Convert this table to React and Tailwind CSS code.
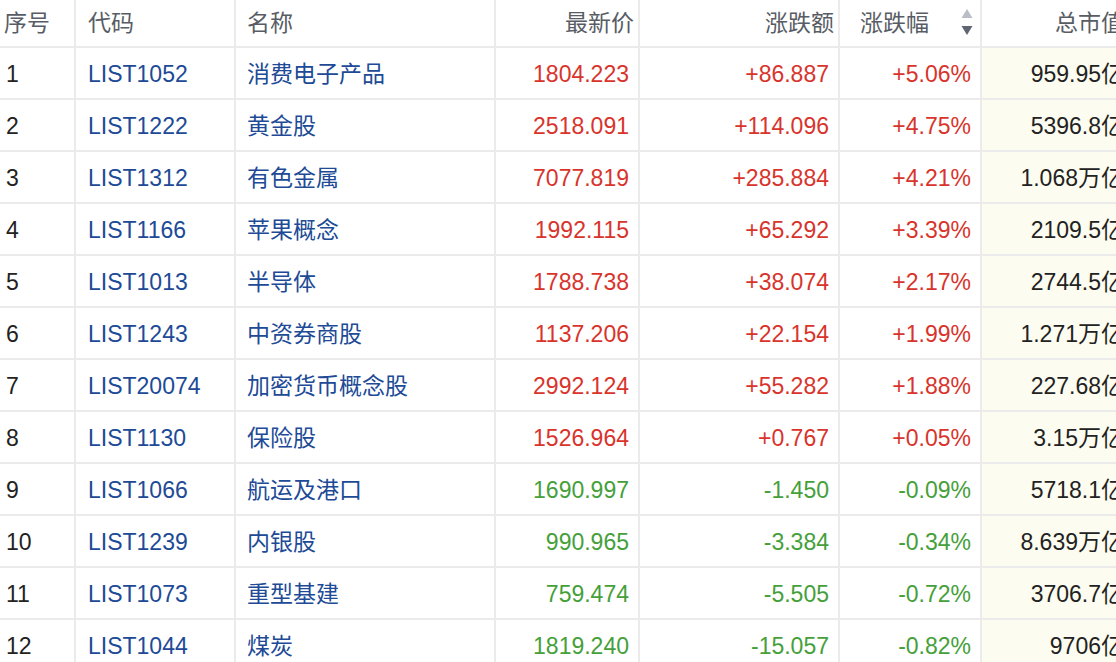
const rows = [
  ["1", "LIST1052", "消费电子产品", "1804.223", "+86.887", "+5.06%", "959.95亿"],
  ["2", "LIST1222", "黄金股", "2518.091", "+114.096", "+4.75%", "5396.8亿"],
  ["3", "LIST1312", "有色金属", "7077.819", "+285.884", "+4.21%", "1.068万亿"],
  ["4", "LIST1166", "苹果概念", "1992.115", "+65.292", "+3.39%", "2109.5亿"],
  ["5", "LIST1013", "半导体", "1788.738", "+38.074", "+2.17%", "2744.5亿"],
  ["6", "LIST1243", "中资券商股", "1137.206", "+22.154", "+1.99%", "1.271万亿"],
  ["7", "LIST20074", "加密货币概念股", "2992.124", "+55.282", "+1.88%", "227.68亿"],
  ["8", "LIST1130", "保险股", "1526.964", "+0.767", "+0.05%", "3.15万亿"],
  ["9", "LIST1066", "航运及港口", "1690.997", "-1.450", "-0.09%", "5718.1亿"],
  ["10", "LIST1239", "内银股", "990.965", "-3.384", "-0.34%", "8.639万亿"],
  ["11", "LIST1073", "重型基建", "759.474", "-5.505", "-0.72%", "3706.7亿"],
  ["12", "LIST1044", "煤炭", "1819.240", "-15.057", "-0.82%", "9706亿"],
];

const grid =
  "grid grid-cols-[76px_160px_260px_144px_200px_142px_150px] w-[1132px]";
const cell = "flex items-center border-r-2 border-[#ebebeb]";
const body = "pt-[3px]";

function SortIcon() {
  return (
    <svg width="12" height="28" viewBox="0 0 12 28" className="ml-auto mr-[7px]">
      <path d="M6 0 L11.5 9 L0.5 9 Z" fill="#b9bdc6" />
      <path d="M0.5 17 L11.5 17 L6 26 Z" fill="#5f6571" />
    </svg>
  );
}

export default function App() {
  return (
    <div
      className="w-[1116px] h-[662px] overflow-hidden bg-white text-[23px]"
      style={{ fontFamily: '"Liberation Sans", "Noto Sans CJK SC", sans-serif' }}
    >
      <div className={`${grid} h-[48px] border-b-2 border-[#ebebeb] text-[#585d65]`}>
        <div className={`${cell} pl-[4px]`}>序号</div>
        <div className={`${cell} pl-[12px]`}>代码</div>
        <div className={`${cell} pl-[11px]`}>名称</div>
        <div className={`${cell} justify-end pr-[4px]`}>最新价</div>
        <div className={`${cell} justify-end pr-[4px]`}>涨跌额</div>
        <div className={`${cell} pl-[20px]`}>
          涨跌幅
          <SortIcon />
        </div>
        <div className="flex items-center justify-end pr-[8px]">总市值</div>
      </div>

      {rows.map((r) => {
        const up = r[4].startsWith("+");
        const tone = up ? "text-[#d8342c]" : "text-[#45a03a]";
        return (
          <div
            key={r[0]}
            className={`${grid} h-[52px] border-b-2 border-[#ebebeb]`}
          >
            <div className={`${cell} ${body} pl-[6px] text-[#222]`}>{r[0]}</div>
            <div className={`${cell} ${body} pl-[12px] text-[#204a96]`}>{r[1]}</div>
            <div className={`${cell} ${body} pl-[11px] text-[#204a96]`}>{r[2]}</div>
            <div className={`${cell} ${body} justify-end pr-[9px] ${tone}`}>{r[3]}</div>
            <div className={`${cell} ${body} justify-end pr-[9px] ${tone}`}>{r[4]}</div>
            <div className={`${cell} ${body} justify-end pr-[9px] ${tone}`}>{r[5]}</div>
            <div className={`flex items-center ${body} justify-end pr-[8px] bg-[#fdfcf0] text-[#222]`}>
              {r[6]}
            </div>
          </div>
        );
      })}
    </div>
  );
}
